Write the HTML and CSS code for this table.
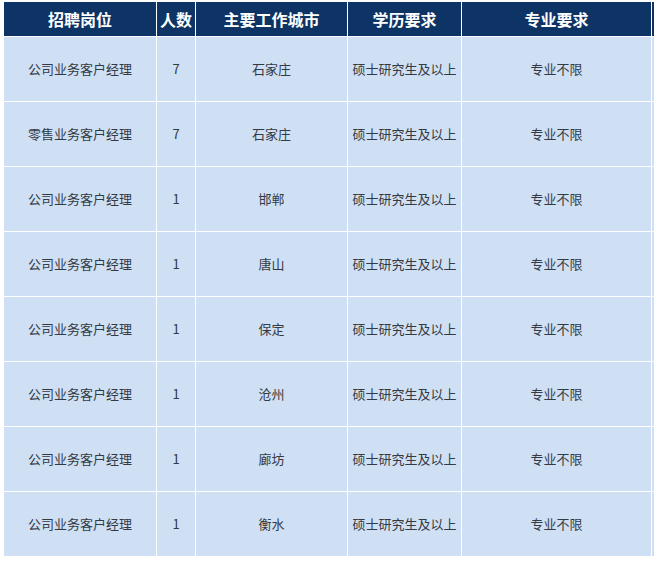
FILE: index.html
```html
<!DOCTYPE html>
<html lang="zh-CN">
<head>
<meta charset="utf-8">
<title>招聘岗位</title>
<link rel="stylesheet" href="styles.css">
</head>
<body>
<div class="wrap">
<table class="jobs">
  <colgroup>
    <col class="c1"><col class="c2"><col class="c3"><col class="c4"><col class="c5"><col class="c6">
  </colgroup>
  <thead>
    <tr><th>招聘岗位</th><th>人数</th><th>主要工作城市</th><th>学历要求</th><th>专业要求</th><th></th></tr>
  </thead>
  <tbody>
    <tr><td>公司业务客户经理</td><td>7</td><td>石家庄</td><td>硕士研究生及以上</td><td>专业不限</td><td></td></tr>
    <tr><td>零售业务客户经理</td><td>7</td><td>石家庄</td><td>硕士研究生及以上</td><td>专业不限</td><td></td></tr>
    <tr><td>公司业务客户经理</td><td>1</td><td>邯郸</td><td>硕士研究生及以上</td><td>专业不限</td><td></td></tr>
    <tr><td>公司业务客户经理</td><td>1</td><td>唐山</td><td>硕士研究生及以上</td><td>专业不限</td><td></td></tr>
    <tr><td>公司业务客户经理</td><td>1</td><td>保定</td><td>硕士研究生及以上</td><td>专业不限</td><td></td></tr>
    <tr><td>公司业务客户经理</td><td>1</td><td>沧州</td><td>硕士研究生及以上</td><td>专业不限</td><td></td></tr>
    <tr><td>公司业务客户经理</td><td>1</td><td>廊坊</td><td>硕士研究生及以上</td><td>专业不限</td><td></td></tr>
    <tr><td>公司业务客户经理</td><td>1</td><td>衡水</td><td>硕士研究生及以上</td><td>专业不限</td><td></td></tr>
  </tbody>
</table>
</div>
</body>
</html>
```
FILE: styles.css
```css
html, body {
  margin: 0;
  padding: 0;
  background: #ffffff;
  overflow: hidden;
}
.wrap {
  padding: 1px 0 0 3px;
  width: 654px;
  height: 561px;
  overflow: hidden;
  box-sizing: border-box;
}
.jobs {
  border-collapse: separate;
  border-spacing: 1px;
  background: #ffffff;
  table-layout: fixed;
  width: 760px;
  font-family: "Noto Sans CJK SC", "Microsoft YaHei", sans-serif;
}
.c1 { width: 152px; }
.c2 { width: 38px; }
.c3 { width: 151px; }
.c4 { width: 113px; }
.c5 { width: 189px; }
.c6 { width: 110px; }
.jobs th {
  height: 34px;
  padding: 0;
  background: #0d3464;
  color: #ffffff;
  font-size: 16px;
  font-weight: bold;
  text-align: center;
  vertical-align: middle;
  line-height: 20px;
}
.jobs td {
  height: 64px;
  padding: 0;
  background: #cfe0f5;
  color: #333a44;
  font-size: 13px;
  text-align: center;
  vertical-align: middle;
  line-height: 18px;
}
```
